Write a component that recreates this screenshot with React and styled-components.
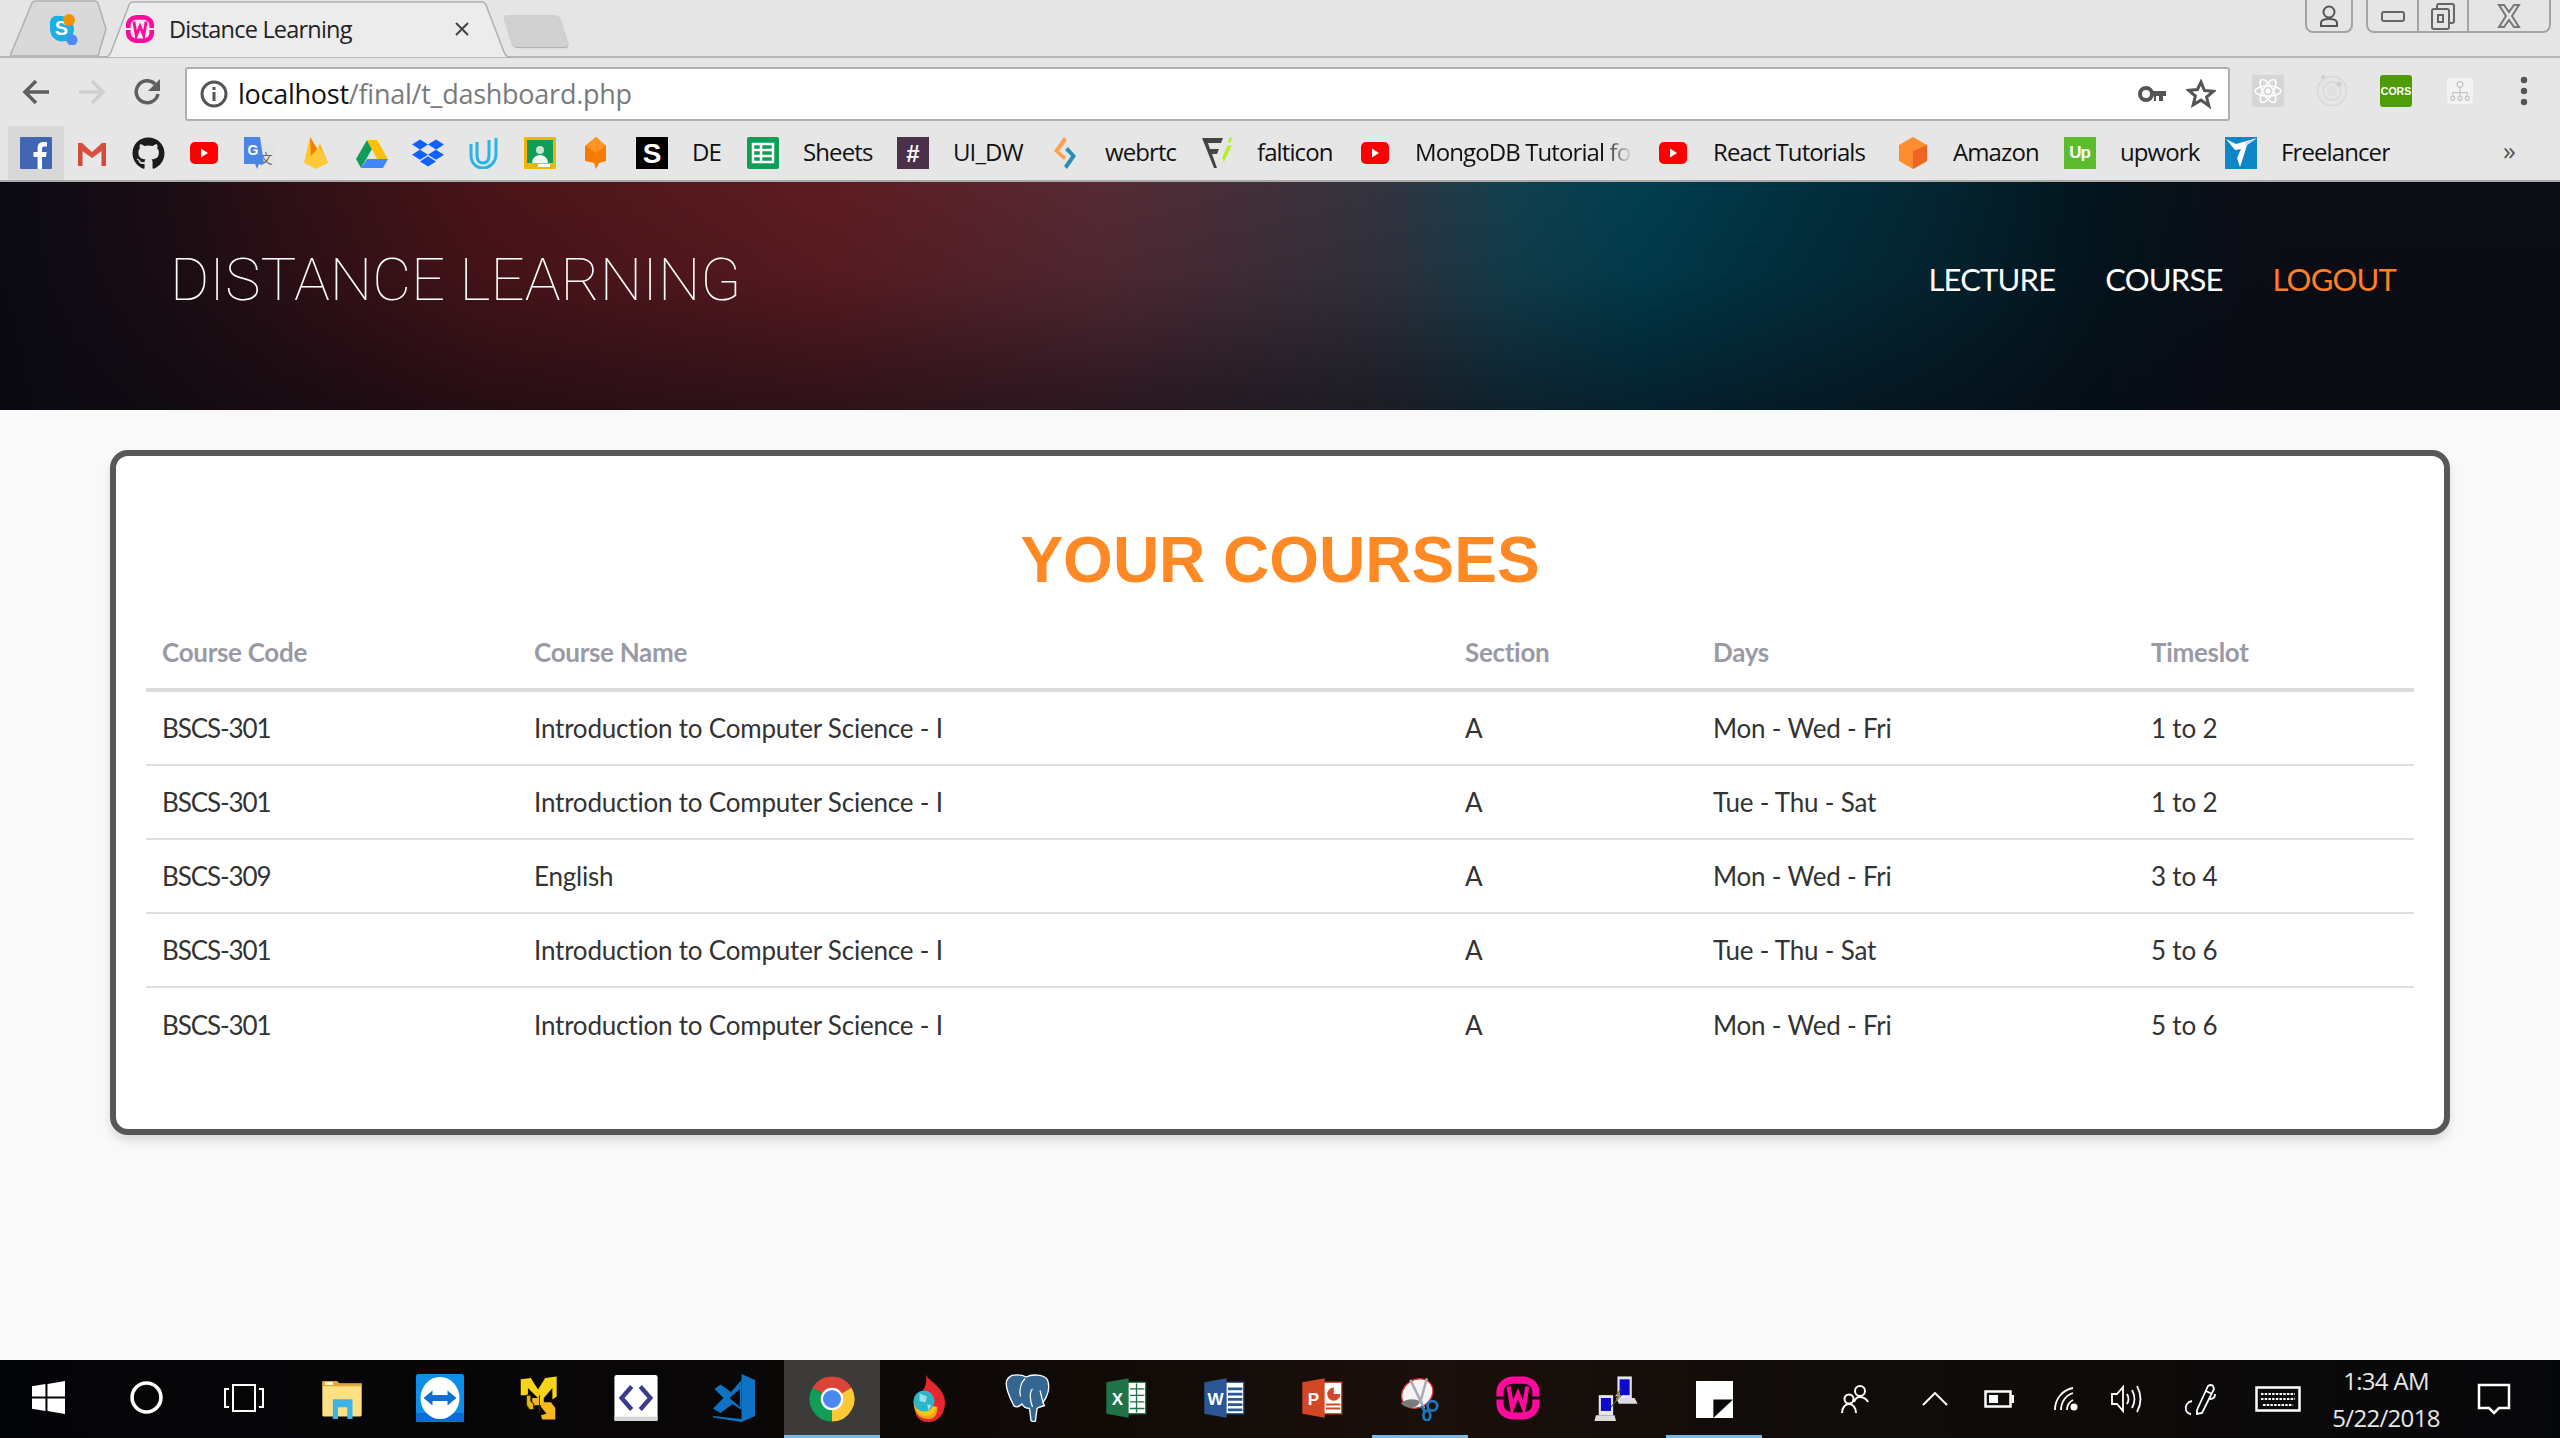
import React from "react";
import styled, { createGlobalStyle } from "styled-components";
import { FaGithub, FaDropbox } from "react-icons/fa";

const GlobalStyle = createGlobalStyle`
  html, body {
    padding: 0;
    margin: 0;
    background: #f9f9f9;
  }
`;

const UI_FONT = `"Open Sans", "Noto Sans", sans-serif`;
const TABLE_FONT = `Lato, "Open Sans", sans-serif`;

const Page = styled.div`
  width: 2560px;
  height: 1438px;
  display: flex;
  flex-direction: column;
  overflow: hidden;
  background: #f9f9f9;
`;

/* ---------- browser chrome ---------- */

const TabStrip = styled.div`
  height: 58px;
  box-sizing: border-box;
  display: flex;
  align-items: flex-start;
  background: #e5e5e5;
  border-bottom: 2px solid #b5b5b5;
  padding-left: 10px;
  position: relative;
`;

const Tab = styled.div`
  position: relative;
  width: ${(p) => p.$w}px;
  height: 58px;
  margin-left: ${(p) => p.$ml || 0}px;
  display: flex;
  align-items: center;
  padding-left: ${(p) => p.$pl}px;
  box-sizing: border-box;
  font: 400 23.5px ${UI_FONT};
  letter-spacing: -0.8px;
  color: #222;
`;

const TabShape = styled.svg`
  position: absolute;
  left: 0;
  top: 0;
`;

const TabIcon = styled.span`
  position: relative;
  display: flex;
  margin-right: 14px;
`;

const TabTitle = styled.span`
  position: relative;
  width: 186px;
  white-space: nowrap;
`;

const TabClose = styled.svg`
  position: relative;
  margin-left: 99px;
`;

const NewTab = styled.div`
  width: 56px;
  height: 32px;
  margin: 15px 0 0 -3px;
  background: #d0d0d0;
  border-radius: 4px;
  box-shadow: 0 1px 1px #aaa;
  transform: skewX(18deg);
`;

const WindowControls = styled.div`
  margin-left: auto;
  padding-right: 9px;
  display: flex;
  gap: 13px;
`;

const ControlGroup = styled.div`
  height: 33px;
  display: flex;
  box-sizing: border-box;
  border: 2px solid #a5a5a5;
  border-top: none;
  border-radius: 0 0 8px 8px;
`;

const ControlCell = styled.div`
  width: ${(p) => p.$w}px;
  box-sizing: border-box;
  display: flex;
  align-items: center;
  justify-content: center;
  border-left: ${(p) => (p.$divider ? "2px solid #a5a5a5" : "none")};
`;

const Toolbar = styled.div`
  height: 62px;
  display: flex;
  align-items: flex-start;
  background: #e6e6e6;
  position: relative;
`;

const NavButtons = styled.div`
  width: 185px;
  height: 62px;
  padding: 6px 0 0 8px;
  box-sizing: border-box;
  display: flex;
`;

const NavButton = styled.div`
  width: 56px;
  height: 56px;
  display: flex;
  align-items: center;
  justify-content: center;
`;

const AddressBar = styled.div`
  width: 2045px;
  height: 54px;
  margin-top: 9px;
  box-sizing: border-box;
  background: #fff;
  border: 2px solid #b0b0b0;
  border-radius: 3px;
  display: flex;
  align-items: center;
  padding: 0 12px 0 13px;
`;

const Url = styled.div`
  margin-left: 10px;
  padding-bottom: 1px;
  white-space: nowrap;
  font: 400 27px ${UI_FONT};
  letter-spacing: -0.25px;
  color: #7a7a7a;
  b {
    font-weight: 400;
    color: #111;
  }
`;

const AddressActions = styled.div`
  margin-left: auto;
  display: flex;
  align-items: center;
  gap: 20px;
`;

const Extensions = styled.div`
  display: flex;
  align-items: center;
  padding: 3px 0 0 8px;
  height: 62px;
  box-sizing: border-box;
`;

const ExtButton = styled.div`
  width: ${(p) => p.$w || 64}px;
  height: 56px;
  display: flex;
  align-items: center;
  justify-content: center;
`;

const BookmarkBar = styled.div`
  height: 62px;
  box-sizing: border-box;
  display: flex;
  align-items: center;
  padding: 6px 0 0 8px;
  background: #e6e6e6;
  border-bottom: 2px solid #aaaaaa;
`;

const Bookmark = styled.div`
  height: 54px;
  display: flex;
  flex: none;
  align-items: center;
  justify-content: ${(p) => (p.$labelled ? "flex-start" : "center")};
  width: ${(p) => (p.$labelled ? "auto" : "56px")};
  padding: ${(p) => (p.$labelled ? "0 12px" : "0")};
  gap: 24px;
  background: ${(p) => (p.$hover ? "#d8d8d8" : "transparent")};
`;

const BookmarkLabel = styled.span`
  display: block;
  width: ${(p) => p.$w}px;
  padding-bottom: 3px;
  overflow: hidden;
  white-space: nowrap;
  font: 400 24px ${UI_FONT};
  letter-spacing: -0.9px;
  color: #111;
  ${(p) =>
    p.$fade
      ? `-webkit-mask-image: linear-gradient(90deg,#000 86%,transparent 100%);
         mask-image: linear-gradient(90deg,#000 86%,transparent 100%);`
      : ""}
`;

const MoreBookmarks = styled.div`
  margin-left: auto;
  padding: 0 44px 6px 0;
  font: 400 26px ${UI_FONT};
  color: #555;
`;

/* ---------- site ---------- */

const SiteHeader = styled.header`
  height: 228px;
  flex: none;
  display: flex;
  align-items: center;
  justify-content: space-between;
  padding: 0 164px 34px 170px;
  box-sizing: border-box;
  background:
    linear-gradient(180deg, rgba(8, 8, 16, 0) 0%, rgba(8, 8, 16, 0.1) 40%, rgba(8, 8, 16, 0.55) 100%),
    linear-gradient(
      90deg,
      #0a0a14 0%,
      #1c0d14 6.5%,
      #4a1418 19%,
      #5e1c22 32.5%,
      #562a34 43%,
      #32343f 54%,
      #12404f 59%,
      #003e50 64%,
      #032430 76%,
      #03141d 82%,
      #0c0c14 89%,
      #0c0c14 100%
    );
`;

const Brand = styled.div`
  font: 100 60px Roboto, sans-serif;
  color: #fff;
  white-space: nowrap;
`;

const SiteNav = styled.nav`
  display: flex;
  gap: 50px;
`;

const SiteLink = styled.a`
  font: 400 31px ${TABLE_FONT};
  letter-spacing: -0.8px;
  color: ${(p) => (p.$accent ? "#ff7f24" : "#fff")};
`;

const Main = styled.main`
  flex: 1;
  padding: 40px 0 0 110px;
`;

const Card = styled.section`
  width: 2340px;
  height: 685px;
  box-sizing: border-box;
  border: 6px solid #575757;
  border-radius: 18px;
  background: #fff;
  box-shadow: 0 6px 10px rgba(0, 0, 0, 0.12);
  padding: 64px 30px 0;
`;

const Heading = styled.h1`
  margin: 0 0 16px;
  text-align: center;
  font: 700 64px/80px "Liberation Sans", Arial, sans-serif;
  color: #ff8a25;
`;

const Row = styled.div`
  display: grid;
  grid-template-columns: 372px 931px 248px 438px 279px;
  align-items: center;
  box-sizing: border-box;
  height: ${(p) => (p.$head ? 76 : 74)}px;
  padding-left: 16px;
  border-bottom: ${(p) => (p.$head ? "4px solid #dcdcdc" : p.$last ? "none" : "2px solid #dfdfdf")};
`;

const HeadCell = styled.div`
  font: 700 26px ${TABLE_FONT};
  letter-spacing: -0.3px;
  color: #9a9aa6;
`;

const Cell = styled.div`
  font: 400 26px ${TABLE_FONT};
  letter-spacing: ${(p) => (p.$code ? "-1.1px" : "-0.2px")};
  color: #333;
`;

/* ---------- taskbar ---------- */

const Taskbar = styled.footer`
  height: 78px;
  flex: none;
  display: flex;
  background: linear-gradient(90deg, #040508 0%, #0a0707 30%, #120b07 45%, #1b100a 56%, #120d0a 68%, #0f0b09 80%, #06070a 100%);
  position: relative;
`;

const TaskButtons = styled.div`
  display: flex;
  gap: 2px;
`;

const TaskButton = styled.div`
  width: 96px;
  height: 78px;
  box-sizing: border-box;
  display: flex;
  align-items: center;
  justify-content: center;
  background: ${(p) => (p.$active ? "#3d3b3a" : "transparent")};
  border-bottom: 3px solid ${(p) => (p.$open ? "#76b9ed" : "transparent")};
  padding-top: ${(p) => (p.$open ? 3 : 0)}px;
`;

const Tray = styled.div`
  margin-left: auto;
  padding-right: 28px;
  display: flex;
  align-items: center;
`;

const TrayIcon = styled.div`
  width: ${(p) => p.$w}px;
  height: 78px;
  display: flex;
  align-items: center;
  justify-content: center;
`;

const Clock = styled.div`
  width: 140px;
  text-align: center;
  font: 400 24px/37px ${UI_FONT};
  letter-spacing: -0.7px;
  color: #e6e6e6;
`;

/* ---------- icons ---------- */

const Ico = ({ s = 32, children }) => (
  <svg width={s} height={s} viewBox="0 0 32 32">
    {children}
  </svg>
);

const Facebook = () => (
  <Ico>
    <rect width="32" height="32" rx="1" fill="#4267b2" />
    <path d="M22 32V20h4l.6-5H22v-3c0-1.400.5-2.400 2.400-2.400H27V5.200C26.500 5.100 25 5 23.400 5 20 5 17.600 7 17.600 11v4h-4.100v5h4.100v12z" fill="#fff" />
  </Ico>
);
const Gmail = () => (
  <Ico>
    <rect x="2" y="6" width="28" height="23" fill="#e8e8e8" />
    <path d="M2 6h4.500v23H2zM25.500 6H30v23h-4.500z" fill="#d2483a" />
    <path d="M2 6h4l10 9 10-9h4v5L16 21 2 11z" fill="#d94f3f" />
  </Ico>
);
const YouTube = () => (
  <Ico>
    <rect x="2" y="5" width="28" height="22" rx="5" fill="#f00" />
    <path d="M13 11.500l7 4.500-7 4.500z" fill="#fff" />
  </Ico>
);
const GTranslate = () => (
  <Ico>
    <rect x="12" y="8" width="19" height="24" fill="#e4e4e4" />
    <text x="22" y="26" fontSize="13" fill="#666" textAnchor="middle" fontFamily="'Noto Sans CJK SC'">文</text>
    <path d="M0 0h16l4 27h-5l-2 5-2-5H0z" fill="#4a86e8" />
    <text x="9" y="18" fontSize="14" fontWeight="700" fill="#fff" textAnchor="middle" fontFamily="'Liberation Sans'">G</text>
  </Ico>
);
const Firebase = () => (
  <Ico>
    <path d="M4 26L10 0l7 12-4 9z" fill="#ffc62b" />
    <path d="M10 0l7 12 3-5 8 19-12-5z" fill="#ffa000" />
    <path d="M4 26l15-18 9 18-12 6z" fill="#ffca3a" />
    <path d="M10 0l7 12-6 7z" fill="#f57c00" />
  </Ico>
);
const Drive = () => (
  <Ico>
    <path d="M11 3L0 22l5 9 11-19z" fill="#0f9d58" />
    <path d="M11 3h10l11 19H21z" fill="#ffc107" />
    <path d="M5 31l6-9h21l-5 9z" fill="#4285f4" />
  </Ico>
);
const Udacity = () => (
  <Ico>
    <path d="M3 7v11c0 8 5 13 12 13 6 0 13-5 13-14V1" fill="none" stroke="#27b5e8" strokeWidth="3" />
    <path d="M9 5v14c0 5 3 7 6 7 4 0 6-3 6-8V3" fill="none" stroke="#27b5e8" strokeWidth="3" />
  </Ico>
);
const Classroom = () => (
  <Ico>
    <rect width="32" height="32" rx="1" fill="#f4b400" />
    <rect x="3" y="3" width="26" height="23" fill="#0f9d58" />
    <circle cx="16" cy="13" r="4" fill="#c9e6d3" />
    <path d="M8 26c0-5 4-8 8-8s8 3 8 8z" fill="#eef7f1" />
    <rect x="14" y="27" width="12" height="3" fill="#fff" />
  </Ico>
);
const OrangeBox = () => (
  <Ico>
    <path d="M16 0l10 9v15l-7 2-3 6-2-6-9-2V9z" fill="#f57c00" />
    <path d="M16 0l10 9-10 7L6 9z" fill="#ff9522" />
  </Ico>
);
const BlackS = () => (
  <Ico>
    <rect width="32" height="32" fill="#000" />
    <text x="16" y="26" fontSize="28" fontWeight="700" fill="#fff" textAnchor="middle" fontFamily="'Liberation Sans'">S</text>
  </Ico>
);
const Sheets = () => (
  <Ico>
    <rect width="32" height="32" rx="2" fill="#0f9d58" />
    <rect x="6" y="7" width="20" height="18" fill="none" stroke="#fff" strokeWidth="2.500" />
    <path d="M6 13h20M6 19h20M14 7v18" stroke="#fff" strokeWidth="2.500" />
  </Ico>
);
const Slack = () => (
  <Ico>
    <rect width="32" height="32" fill="#4a3049" />
    <text x="16" y="25" fontSize="24" fontWeight="700" fill="#fff" textAnchor="middle" fontFamily="'Liberation Sans'">#</text>
  </Ico>
);
const Sourcetree = () => (
  <Ico>
    <path d="M15 0l3 3-8 11 7 6-2 3L5 14z" fill="#ff9f4a" />
    <path d="M19 10l8 9-9 13-3-3 7-10-6-6z" fill="#2d8db5" />
  </Ico>
);
const Flaticon = () => (
  <Ico>
    <path d="M1 1h21l-2 5H7l2 6h9l-2 5h-5l5 14h-3z" fill="#444" />
    <path d="M26 9l5-1-8 17-2-4zM28 1l3-1-1 5-3 1z" fill="#b5f02a" />
  </Ico>
);
const AmazonBox = () => (
  <Ico>
    <path d="M16 0l14 8v16l-14 8L2 24V8z" fill="#ff8c2e" />
    <path d="M16 14l14-6v16l-14 8z" fill="#ee6423" />
  </Ico>
);
const Upwork = () => (
  <Ico>
    <rect width="32" height="32" fill="#5dbb2f" />
    <text x="15.500" y="21" fontSize="17" fontWeight="700" fill="#fff" textAnchor="middle" fontFamily="'Liberation Sans'" letterSpacing="-1">Up</text>
  </Ico>
);
const Freelancer = () => (
  <Ico>
    <rect width="32" height="32" fill="#0f86c6" />
    <path d="M1 2l10 5 21-6-10 7-4 13-3 9-3-9 4-9-6 1z" fill="#fff" />
    <path d="M20 5l9-2-8 6z" fill="#bfe3f5" />
  </Ico>
);
const Skype = () => (
  <Ico>
    <path d="M4 9a7 7 0 0 1 9-6c8-1 15 5 15 13 0 2 0 3-1 4 2 5-3 10-8 8-8 2-15-4-15-12 0-2 0-4 0-7z" fill="#1daee4" />
    <text x="15" y="22" fontSize="20" fontWeight="700" fill="#fff" textAnchor="middle" fontFamily="'Liberation Sans'">S</text>
    <circle cx="23" cy="7" r="6" fill="#f39200" />
    <circle cx="26" cy="27" r="5.500" fill="#4d8cf5" />
  </Ico>
);
const Wamp = ({ s }) => (
  <Ico s={s}>
    <path d="M1 15v-3C1 5 7 1 13 1h6c6 0 12 4 12 11v3h-5v-3c0-4-3-6-7-6h-6c-4 0-7 2-7 6v3z" fill="#ff0a9c" />
    <path d="M1 17v3c0 7 6 11 12 11h6c6 0 12-4 12-11v-3h-5v3c0 4-3 6-7 6h-6c-4 0-7-2-7-6v-3z" fill="#ff0a9c" />
    <path d="M9.500 8l2.500 15 4-10 4 10 2.500-15" fill="none" stroke="#ff0a9c" strokeWidth="3" />
  </Ico>
);

const ReactExt = () => (
  <Ico>
    <rect width="32" height="32" rx="1" fill="#d6d6d6" />
    <g fill="none" stroke="#fff" strokeWidth="1.500">
      <ellipse cx="16" cy="16" rx="13" ry="5" />
      <ellipse cx="16" cy="16" rx="13" ry="5" transform="rotate(60 16 16)" />
      <ellipse cx="16" cy="16" rx="13" ry="5" transform="rotate(120 16 16)" />
    </g>
    <circle cx="16" cy="16" r="2.500" fill="#fff" />
  </Ico>
);
const OrbitExt = () => (
  <Ico>
    <g fill="none" stroke="#d8d8d8" strokeWidth="1.500">
      <circle cx="16" cy="16" r="14.500" />
      <circle cx="16" cy="16" r="9" />
    </g>
    <circle cx="16" cy="16" r="5" fill="#e0e0e0" />
    <circle cx="23" cy="9" r="2.500" fill="#cfcfcf" />
    <circle cx="7" cy="2" r="2" fill="#cfcfcf" />
  </Ico>
);
const CorsExt = () => (
  <Ico>
    <rect width="32" height="32" rx="3" fill="#4f9b08" />
    <text x="16" y="20" fontSize="10.500" fontWeight="700" fill="#fff" textAnchor="middle" fontFamily="'Liberation Sans'">CORS</text>
  </Ico>
);
const TreeExt = () => (
  <Ico s={26}>
    <rect width="32" height="32" rx="4" fill="#f2f2f2" />
    <g fill="none" stroke="#c4c4c4" strokeWidth="1.500">
      <circle cx="16" cy="8" r="3.500" />
      <circle cx="7" cy="25" r="2.500" />
      <circle cx="16" cy="25" r="2.500" />
      <circle cx="25" cy="25" r="2.500" />
      <path d="M16 11.500v11M7 22.500V18h18v4.500" />
    </g>
  </Ico>
);

const Folder = () => (
  <Ico s={42}>
    <path d="M1 4a1 1 0 0 1 1-1h10l2 2h17v24a1 1 0 0 1-1 1H2a1 1 0 0 1-1-1z" fill="#ffe082" />
    <path d="M1 4a1 1 0 0 1 1-1h10l2 2h17v2H1z" fill="#e0a93a" />
    <rect x="3" y="4" width="6" height="2" fill="#fff" />
    <path d="M9 32V17h15v15h-4v-9h-7v9z" fill="#3cb4e7" />
  </Ico>
);
const TeamViewer = () => (
  <Ico s={48}>
    <rect width="32" height="32" rx="1.500" fill="#0e8ee9" />
    <rect y="26" width="32" height="6" fill="#0a6fd0" />
    <ellipse cx="16" cy="16" rx="13" ry="14" fill="#fff" />
    <path d="M5 16l6-5v3h10v-3l6 5-6 5v-3H11v3z" fill="#0e6fd0" />
  </Ico>
);
const VmIcon = () => (
  <Ico s={46}>
    <path d="M4 3l7-1 5 8 5-8 8-1v14l-3 2V9l-6 7v5h-4v-5L9 9v5H4z" fill="#f6d41a" />
    <path d="M12 16h4v5h-4zM18 19h7l3 4v8H19l-1-3 4-1-4-5z" fill="#f7b81f" />
    <path d="M8 14h3v4l2 2v4h-3l-2-3zM17 14v12" fill="#e4b90f" stroke="#3a2c00" strokeWidth="0.800" />
  </Ico>
);
const CodeCard = () => (
  <Ico s={46}>
    <rect x="1" width="30" height="32" rx="1.500" fill="#fff" />
    <rect x="1" y="29" width="30" height="3" fill="#d6d6d6" />
    <path d="M13 8l-7 8 7 8M19 8l7 8-7 8" fill="none" stroke="#3d3a8c" strokeWidth="3" />
  </Ico>
);
const VsCode = () => (
  <Ico s={48}>
    <path d="M21 0l9 4v24l-9 4-19-3 0-1 19 2z" fill="#0e73c5" />
    <path d="M21 4v20l-6-4-8 6-5-3 7-7-6-6 4-3 7 5z" fill="#0e73c5" />
    <path d="M13 16l7 6V10z" fill="#0a0808" />
  </Ico>
);
const Chrome = () => (
  <Ico s={48}>
    <path d="M16 16L3 8.500A15 15 0 0 1 29 8.500z" fill="#db4437" />
    <path d="M16 16l13-7.500A15 15 0 0 1 16 31z" fill="#fcc934" />
    <path d="M16 16L16 31A15 15 0 0 1 3 8.500z" fill="#0f9d58" />
    <circle cx="16" cy="16" r="7.500" fill="#fff" />
    <circle cx="16" cy="16" r="6" fill="#4a88f0" />
  </Ico>
);
const Torch = () => (
  <Ico s={48}>
    <path d="M13 0c2 5 13 9 13 19 0 8-5 13-11 13 -7 0-9-5-9-9 0-8 10-13 7-23z" fill="#e8262d" />
    <path d="M5 18c0 8 4 12 10 12 4 0 6-3 6-8z" fill="#f7a21b" />
    <path d="M6 21c1 5 4 7 8 7 3 0 5-2 6-6z" fill="#f6c71a" />
    <circle cx="12" cy="18" r="7" fill="#2cb4c9" />
    <path d="M9 13l5 2-1 4-4-1zM14 20l3 1-2 3z" fill="#9ae0e4" />
  </Ico>
);
const Elephant = () => (
  <Ico s={48}>
    <path d="M5 1c5-1 8 0 10 1 3-2 12-2 14 2 2 5 0 11-3 15l1 2-3 1-2 1-1 8c0 1-2 1-3 0l-1-8c-3 0-4-1-5-3-2 2-5 3-6 0C4 16 0 8 2 4c1-2 2-2 3-3z" fill="#336791" stroke="#fff" strokeWidth="0.900" />
    <path d="M14 3c-3 3-4 8-3 12M19 10c-2 2-2 7 0 12M24 11l2 8" fill="none" stroke="#fff" strokeWidth="0.800" />
  </Ico>
);
const Office = ({ letter, dark, light, children }) => (
  <Ico s={42}>
    <rect x="15" y="4" width="16" height="24" fill="#fff" stroke={light} strokeWidth="1" />
    {children}
    <path d="M1 4l17-3v30L1 28z" fill={dark} />
    <text x="9.500" y="21" fontSize="13" fontWeight="700" fill="#fff" textAnchor="middle" fontFamily="'Liberation Sans'">{letter}</text>
  </Ico>
);
const Excel = () => (
  <Office letter="X" dark="#1f7346" light="#1f7346">
    <path d="M19 9h11M19 14h11M19 19h11M19 24h11M24 5v22" stroke="#1f7346" strokeWidth="1" />
  </Office>
);
const Word = () => (
  <Office letter="W" dark="#2b5797" light="#2b5797">
    <path d="M19 9h11M19 13h11M19 17h11M19 21h11M19 25h11" stroke="#2b5797" strokeWidth="2" />
  </Office>
);
const PowerPoint = () => (
  <Office letter="P" dark="#d24726" light="#d24726">
    <path d="M25 8a5 5 0 1 0 5 5h-5z" fill="#d24726" />
    <path d="M19 21h11M19 24h11" stroke="#d24726" strokeWidth="1.500" />
  </Office>
);
const Snip = () => (
  <Ico s={44}>
    <ellipse cx="14" cy="12" rx="12" ry="10" transform="rotate(-35 14 12)" fill="#f5f5f5" stroke="#d33" strokeWidth="1" />
    <path d="M2 19c4-3 10-4 14-1-2 5-9 6-14 1z" fill="#7a7a7a" />
    <path d="M9 2l10 21M21 1l-5 18" stroke="#a9a9b5" strokeWidth="1.800" />
    <path d="M17 21l3 5" stroke="#1a78c2" strokeWidth="2" />
    <circle cx="25" cy="21" r="3.500" fill="none" stroke="#1a78c2" strokeWidth="2" />
    <ellipse cx="21" cy="28" rx="2.500" ry="3.500" fill="none" stroke="#1a78c2" strokeWidth="2" />
  </Ico>
);
const Network = () => (
  <Ico s={46}>
    <rect x="17" y="1" width="10" height="15" fill="#e6e6e6" />
    <rect x="18.500" y="3" width="7" height="11" fill="#0b0bd0" />
    <path d="M16 16h13l2 4H18z" fill="#dcdcdc" />
    <rect x="4" y="14" width="10" height="14" fill="#e6e6e6" />
    <rect x="5.500" y="16" width="7" height="9" fill="#0b0bd0" />
    <path d="M2 28h13l1 4H1z" fill="#dcdcdc" />
    <path d="M20 9l-5 6 3 0-6 8 8-9-3 0 3-5z" fill="#ffee00" stroke="#222" strokeWidth="0.400" />
  </Ico>
);
const Sticky = () => (
  <Ico s={37}>
    <rect width="32" height="32" fill="#fff" />
    <path d="M15 16h17L15 32z" fill="#0a0808" />
  </Ico>
);

const BOOKMARKS = [
  { icon: <Facebook />, hover: true },
  { icon: <Gmail /> },
  { icon: <FaGithub size={33} color="#1c1c1c" /> },
  { icon: <YouTube /> },
  { icon: <GTranslate /> },
  { icon: <Firebase /> },
  { icon: <Drive /> },
  { icon: <FaDropbox size={32} color="#0f62fe" /> },
  { icon: <Udacity /> },
  { icon: <Classroom /> },
  { icon: <OrangeBox /> },
  { icon: <BlackS /> },
  { label: "DE", w: 31 },
  { icon: <Sheets />, label: "Sheets", w: 70 },
  { icon: <Slack />, label: "UI_DW", w: 72 },
  { icon: <Sourcetree />, label: "webrtc", w: 72 },
  { icon: <Flaticon />, label: "falticon", w: 78 },
  { icon: <YouTube />, label: "MongoDB Tutorial for", w: 218, fade: true },
  { icon: <YouTube />, label: "React Tutorials", w: 160 },
  { icon: <AmazonBox />, label: "Amazon", w: 87 },
  { icon: <Upwork />, label: "upwork", w: 81 },
  { icon: <Freelancer />, label: "Freelancer", w: 109 },
];

const COLUMNS = ["Course Code", "Course Name", "Section", "Days", "Timeslot"];

const COURSES = [
  ["BSCS-301", "Introduction to Computer Science - I", "A", "Mon - Wed - Fri", "1 to 2"],
  ["BSCS-301", "Introduction to Computer Science - I", "A", "Tue - Thu - Sat", "1 to 2"],
  ["BSCS-309", "English", "A", "Mon - Wed - Fri", "3 to 4"],
  ["BSCS-301", "Introduction to Computer Science - I", "A", "Tue - Thu - Sat", "5 to 6"],
  ["BSCS-301", "Introduction to Computer Science - I", "A", "Mon - Wed - Fri", "5 to 6"],
];

const TASK_ICONS = [
  {
    icon: (
      <svg width="33" height="33" viewBox="0 0 32 32">
        <path d="M0 5l13-2v12H0zM15 3l17-3v15H15zM0 17h13v12L0 27zM15 17h17v15l-17-3z" fill="#fff" />
      </svg>
    ),
  },
  {
    icon: (
      <svg width="33" height="33" viewBox="0 0 32 32">
        <circle cx="16" cy="16" r="14" fill="none" stroke="#fff" strokeWidth="3.500" />
      </svg>
    ),
  },
  {
    icon: (
      <svg width="40" height="28" viewBox="0 0 40 28">
        <rect x="9" y="1" width="22" height="26" fill="none" stroke="#fff" strokeWidth="2" />
        <path d="M5 5H1v18h4M35 5h4v18h-4" fill="none" stroke="#fff" strokeWidth="2" />
      </svg>
    ),
  },
  { icon: <Folder /> },
  { icon: <TeamViewer /> },
  { icon: <VmIcon /> },
  { icon: <CodeCard /> },
  { icon: <VsCode /> },
  { icon: <Chrome />, active: true, open: true },
  { icon: <Torch /> },
  { icon: <Elephant /> },
  { icon: <Excel /> },
  { icon: <Word /> },
  { icon: <PowerPoint /> },
  { icon: <Snip />, open: true },
  { icon: <Wamp s={46} /> },
  { icon: <Network /> },
  { icon: <Sticky />, open: true },
];

const Stroke = ({ w, h, sw = 2, children, color = "#fff" }) => (
  <svg width={w} height={h} viewBox={`0 0 ${w} ${h}`} fill="none" stroke={color} strokeWidth={sw}>
    {children}
  </svg>
);

export default () => {
  return (
    <Page>
      <GlobalStyle />
      <TabStrip>
        <Tab $w={110} $pl={36}>
          <TabShape width="110" height="56" viewBox="0 0 110 56">
            <path d="M0 56L22 3q1-2 4-2h58q3 0 4 2l8 26-8 27z" fill="#d9d9d9" stroke="#b0b0b0" strokeWidth="1.500" />
          </TabShape>
          <TabIcon>
            <Skype />
          </TabIcon>
        </Tab>
        <Tab $w={408} $ml={-17} $pl={22}>
          <TabShape width="408" height="58" viewBox="0 0 408 58">
            <path d="M0 57h2q4 0 6-5L26 5q1-3 5-3h348q3 0 4 3l18 47q2 5 6 5" fill="#ececec" stroke="#b0b0b0" strokeWidth="1.500" />
          </TabShape>
          <TabIcon>
            <Wamp s={30} />
          </TabIcon>
          <TabTitle>Distance Learning</TabTitle>
          <TabClose width="16" height="16" viewBox="0 0 16 16" fill="none" stroke="#444" strokeWidth="2">
            <path d="M2 2l12 12M14 2L2 14" />
          </TabClose>
        </Tab>
        <NewTab />
        <WindowControls>
          <ControlGroup>
            <ControlCell $w={44}>
              <Stroke w={22} h={24} color="#555">
                <circle cx="11" cy="8" r="5.500" />
                <path d="M3 22v-3c0-3 4-4 8-4s8 1 8 4v3z" />
              </Stroke>
            </ControlCell>
          </ControlGroup>
          <ControlGroup>
            <ControlCell $w={49}>
              <Stroke w={26} h={16} color="#666">
                <rect x="2" y="4" width="22" height="9" rx="2" />
              </Stroke>
            </ControlCell>
            <ControlCell $w={50} $divider>
              <Stroke w={26} h={30} color="#666">
                <rect x="2" y="8" width="17" height="20" rx="2" />
                <path d="M7 8V5q0-2 2-2h13q2 0 2 2v15q0 2-2 2h-3" />
                <rect x="8" y="14" width="5" height="7" />
              </Stroke>
            </ControlCell>
            <ControlCell $w={82} $divider>
              <Stroke w={24} h={26} color="#777">
                <path d="M2 2h5l5 7 5-7h5l-7 11 7 11h-5l-5-7-5 7H2l7-11z" />
              </Stroke>
            </ControlCell>
          </ControlGroup>
        </WindowControls>
      </TabStrip>

      <Toolbar>
        <NavButtons>
          <NavButton>
            <Stroke w={28} h={28} sw={3.5} color="#5f5f5f">
              <path d="M14 3L3 14l11 11M3 14h24" />
            </Stroke>
          </NavButton>
          <NavButton>
            <Stroke w={28} h={28} sw={3.5} color="#cfcfcf">
              <path d="M14 3l11 11-11 11M25 14H1" />
            </Stroke>
          </NavButton>
          <NavButton>
            <svg width="30" height="30" viewBox="0 0 30 30">
              <path d="M25 17a11 11 0 1 1-3-10" fill="none" stroke="#5f5f5f" strokeWidth="3.500" />
              <path d="M27 2v12H15z" fill="#5f5f5f" />
            </svg>
          </NavButton>
        </NavButtons>
        <AddressBar>
          <svg width="28" height="28" viewBox="0 0 28 28">
            <circle cx="14" cy="14" r="12" fill="none" stroke="#555" strokeWidth="3" />
            <rect x="12.500" y="12" width="3" height="9" fill="#555" />
            <rect x="12.500" y="7" width="3" height="3" fill="#555" />
          </svg>
          <Url>
            <b>localhost</b>/final/t_dashboard.php
          </Url>
          <AddressActions>
            <svg width="28" height="22" viewBox="0 0 28 22">
              <circle cx="8" cy="11" r="6" fill="none" stroke="#555" strokeWidth="4" />
              <path d="M13 8h15v5h-3v5h-4v-5h-3v5h-2v-5h-3z" fill="#555" />
            </svg>
            <svg width="30" height="30" viewBox="0 0 30 30">
              <path d="M15 3l3.500 8.500 9 .7-6.900 5.800 2.200 8.800L15 21.100 7.200 25.800l2.200-8.800-6.900-5.800 9-.7z" fill="none" stroke="#555" strokeWidth="3" />
            </svg>
          </AddressActions>
        </AddressBar>
        <Extensions>
          <ExtButton $w={60}>
            <ReactExt />
          </ExtButton>
          <ExtButton $w={68}>
            <OrbitExt />
          </ExtButton>
          <ExtButton $w={60}>
            <CorsExt />
          </ExtButton>
          <ExtButton $w={68}>
            <TreeExt />
          </ExtButton>
          <ExtButton $w={60}>
            <svg width="8" height="30" viewBox="0 0 8 30">
              <circle cx="4" cy="4" r="3.200" fill="#555" />
              <circle cx="4" cy="15" r="3.200" fill="#555" />
              <circle cx="4" cy="26" r="3.200" fill="#555" />
            </svg>
          </ExtButton>
        </Extensions>
      </Toolbar>

      <BookmarkBar>
        {BOOKMARKS.map((b, idx) => (
          <Bookmark key={idx} $labelled={!!b.label} $hover={b.hover}>
            {b.icon}
            {b.label && (
              <BookmarkLabel $w={b.w} $fade={b.fade}>
                {b.label}
              </BookmarkLabel>
            )}
          </Bookmark>
        ))}
        <MoreBookmarks>»</MoreBookmarks>
      </BookmarkBar>

      <SiteHeader>
        <Brand>DISTANCE LEARNING</Brand>
        <SiteNav>
          <SiteLink>LECTURE</SiteLink>
          <SiteLink>COURSE</SiteLink>
          <SiteLink $accent>LOGOUT</SiteLink>
        </SiteNav>
      </SiteHeader>

      <Main>
        <Card>
          <Heading>YOUR COURSES</Heading>
          <Row $head>
            {COLUMNS.map((c) => (
              <HeadCell key={c}>{c}</HeadCell>
            ))}
          </Row>
          {COURSES.map((course, idx) => (
            <Row key={idx} $last={idx === COURSES.length - 1}>
              {course.map((value, i) => (
                <Cell key={i} $code={i === 0}>
                  {value}
                </Cell>
              ))}
            </Row>
          ))}
        </Card>
      </Main>

      <Taskbar>
        <TaskButtons>
          {TASK_ICONS.map((t, idx) => (
            <TaskButton key={idx} $active={t.active} $open={t.open}>
              {t.icon}
            </TaskButton>
          ))}
        </TaskButtons>
        <Tray>
          <TrayIcon $w={114}>
            <Stroke w={28} h={30}>
              <circle cx="19" cy="7" r="5" />
              <path d="M13 18c1-3 3-5 6-5s7 2 8 5" />
              <circle cx="8" cy="15" r="4.500" />
              <path d="M1 29c0-5 3-9 7-9s7 4 7 9" />
            </Stroke>
          </TrayIcon>
          <TrayIcon $w={46}>
            <Stroke w={26} h={14}>
              <path d="M1 13L13 1l12 12" />
            </Stroke>
          </TrayIcon>
          <TrayIcon $w={82}>
            <svg width="30" height="18" viewBox="0 0 30 18">
              <rect x="1.500" y="1.500" width="25" height="15" fill="none" stroke="#fff" strokeWidth="2.500" />
              <rect x="5" y="5" width="9" height="8" fill="#fff" />
              <rect x="27.500" y="5" width="2.500" height="8" fill="#fff" />
            </svg>
          </TrayIcon>
          <TrayIcon $w={52}>
            <svg width="26" height="24" viewBox="0 0 26 24">
              <path d="M2 23C2 11 10 3 20 1M8 23C8 15 13 8 20 6M14 23c0-5 2-8 6-10" fill="none" stroke="#fff" strokeWidth="1.800" />
              <circle cx="21" cy="20" r="3.500" fill="#fff" />
            </svg>
          </TrayIcon>
          <TrayIcon $w={68}>
            <Stroke w={32} h={30} sw={1.8}>
              <path d="M2 10h5l6-7v24l-6-7H2zM17 10q3 5 0 10M22 6q5 9 0 18M27 2q7 13 0 26" />
            </Stroke>
          </TrayIcon>
          <TrayIcon $w={80}>
            <Stroke w={33} h={32} sw={1.8}>
              <path d="M13 27L24 3q3-2 5 0l1 3-12 24-5 1zM22 8l6 3" />
              <path d="M8 18c-5 1-7 5-6 9 0 2 3 4 5 4M26 16c3 0 5-2 5-5" />
            </Stroke>
          </TrayIcon>
          <TrayIcon $w={76}>
            <svg width="46" height="26" viewBox="0 0 46 26">
              <rect x="1.500" y="1.500" width="43" height="23" fill="none" stroke="#fff" strokeWidth="2.500" />
              <path d="M6 8h34M6 13h34M8 19h30" stroke="#fff" strokeWidth="2" strokeDasharray="2.500 1.200" />
            </svg>
          </TrayIcon>
          <Clock>
            1:34 AM
            <br />
            5/22/2018
          </Clock>
          <TrayIcon $w={76}>
            <Stroke w={34} h={32} sw={2.5}>
              <path d="M2 2h30v23H22l-5 5-5-5H2z" />
            </Stroke>
          </TrayIcon>
        </Tray>
      </Taskbar>
    </Page>
  );
};
